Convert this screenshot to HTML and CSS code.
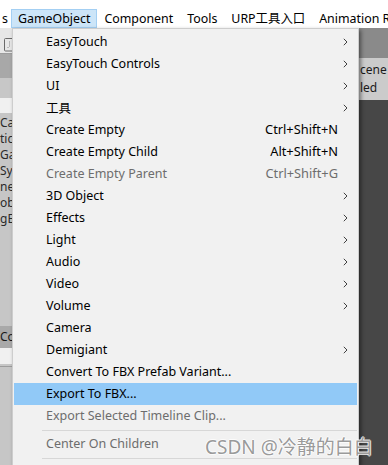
FILE: index.html
```html
<!DOCTYPE html>
<html>
<head>
<meta charset="utf-8">
<link rel="stylesheet" href="styles.css">
</head>
<body>
<div class="screen">
  <div class="menubar">
    <div class="mb-item first">s</div>
    <div class="mb-item active">GameObject</div>
    <div class="mb-item">Component</div>
    <div class="mb-item">Tools</div>
    <div class="mb-item">URP工具入口</div>
    <div class="mb-item">Animation R</div>
  </div>
  <div class="main">
    <div class="left">
      <div class="l-top">
        <svg class="l-icon" width="9" height="15" viewBox="0 0 9 15"><path d="M9 1.5H2.5a1 1 0 0 0-1 1V13a1 1 0 0 0 1 1H9" fill="none" stroke="#6a6a6a" stroke-width="1"/><path d="M6.5 4.5v6M4.5 10.5h2" fill="none" stroke="#8a8a8a" stroke-width="1" stroke-dasharray="1 1"/></svg>
      </div>
      <div class="l-dark"></div>
      <div class="l-mid"></div>
      <div class="l-input"></div>
      <div class="l-list">
        <div class="l-row">Ca</div>
        <div class="l-row">tic</div>
        <div class="l-row">Ga</div>
        <div class="l-row">Sy</div>
        <div class="l-row">ne</div>
        <div class="l-row">ob</div>
        <div class="l-row">gB</div>
      </div>
      <div class="l-fill"></div>
      <div class="l-co">Co</div>
      <div class="l-input2"></div>
      <div class="l-line"></div>
      <div class="l-rest"></div>
    </div>
    <div class="dropdown">
      <div class="row"><span>EasyTouch</span><svg class="arrow" width="5" height="8" viewBox="0 0 5 8"><path d="M0.8 0.8L4 4L0.8 7.2" fill="none" stroke="#404040" stroke-width="1"/></svg></div>
      <div class="row"><span>EasyTouch Controls</span><svg class="arrow" width="5" height="8" viewBox="0 0 5 8"><path d="M0.8 0.8L4 4L0.8 7.2" fill="none" stroke="#404040" stroke-width="1"/></svg></div>
      <div class="row"><span>UI</span><svg class="arrow" width="5" height="8" viewBox="0 0 5 8"><path d="M0.8 0.8L4 4L0.8 7.2" fill="none" stroke="#404040" stroke-width="1"/></svg></div>
      <div class="row"><span>工具</span><svg class="arrow" width="5" height="8" viewBox="0 0 5 8"><path d="M0.8 0.8L4 4L0.8 7.2" fill="none" stroke="#404040" stroke-width="1"/></svg></div>
      <div class="row"><span>Create Empty</span><span class="sc">Ctrl+Shift+N</span></div>
      <div class="row"><span>Create Empty Child</span><span class="sc">Alt+Shift+N</span></div>
      <div class="row disabled"><span>Create Empty Parent</span><span class="sc">Ctrl+Shift+G</span></div>
      <div class="row"><span>3D Object</span><svg class="arrow" width="5" height="8" viewBox="0 0 5 8"><path d="M0.8 0.8L4 4L0.8 7.2" fill="none" stroke="#404040" stroke-width="1"/></svg></div>
      <div class="row"><span>Effects</span><svg class="arrow" width="5" height="8" viewBox="0 0 5 8"><path d="M0.8 0.8L4 4L0.8 7.2" fill="none" stroke="#404040" stroke-width="1"/></svg></div>
      <div class="row"><span>Light</span><svg class="arrow" width="5" height="8" viewBox="0 0 5 8"><path d="M0.8 0.8L4 4L0.8 7.2" fill="none" stroke="#404040" stroke-width="1"/></svg></div>
      <div class="row"><span>Audio</span><svg class="arrow" width="5" height="8" viewBox="0 0 5 8"><path d="M0.8 0.8L4 4L0.8 7.2" fill="none" stroke="#404040" stroke-width="1"/></svg></div>
      <div class="row"><span>Video</span><svg class="arrow" width="5" height="8" viewBox="0 0 5 8"><path d="M0.8 0.8L4 4L0.8 7.2" fill="none" stroke="#404040" stroke-width="1"/></svg></div>
      <div class="row"><span>Volume</span><svg class="arrow" width="5" height="8" viewBox="0 0 5 8"><path d="M0.8 0.8L4 4L0.8 7.2" fill="none" stroke="#404040" stroke-width="1"/></svg></div>
      <div class="row"><span>Camera</span></div>
      <div class="row"><span>Demigiant</span><svg class="arrow" width="5" height="8" viewBox="0 0 5 8"><path d="M0.8 0.8L4 4L0.8 7.2" fill="none" stroke="#404040" stroke-width="1"/></svg></div>
      <div class="row"><span>Convert To FBX Prefab Variant...</span></div>
      <div class="row hl"><span>Export To FBX...</span></div>
      <div class="row disabled"><span>Export Selected Timeline Clip...</span></div>
      <div class="sep"></div>
      <div class="row disabled"><span>Center On Children</span></div>
      <div class="sep"></div>
    </div>
    <div class="right">
      <div class="r-top"></div>
      <div class="r-light">
        <div class="r-text">cene</div>
        <div class="r-text">led</div>
      </div>
      <div class="r-dark"></div>
    </div>
  </div>
  <div class="watermark">CSDN @冷静的白白</div>
</div>
</body>
</html>
```
FILE: styles.css
```css
html, body {
  margin: 0;
  padding: 0;
}
body {
  font-family: "Noto Sans", "Noto Sans CJK SC", sans-serif;
  font-size: 12px;
  color: #000;
}
.screen {
  position: relative;
  width: 388px;
  height: 465px;
  overflow: hidden;
  background: #c6c6c6;
}
.menubar {
  height: 28px;
  background: #fff;
  display: flex;
  align-items: flex-end;
  white-space: nowrap;
  box-sizing: border-box;
}
.mb-item {
  height: 19px;
  line-height: 17px;
  padding: 0 6px;
  border: 1px solid transparent;
  box-sizing: border-box;
  font-size: 12.4px;
  color: #000;
}
.mb-item.first {
  padding: 0 2px 0 1px;
}
.mb-item.active {
  background: #cce5f8;
  border-color: #a3cff3;
}
.main {
  display: flex;
  height: 437px;
}
.left {
  width: 12px;
  display: flex;
  flex-direction: column;
  overflow: hidden;
  flex: none;
}
.l-top {
  background: #e7e7e7;
  border-bottom: 1px solid #9c9c9c;
  display: flex;
  align-items: flex-start;
  padding-top: 9px;
  padding-left: 3px;
  height: 16px;
}
.l-icon {
  display: block;
}
.l-dark {
  height: 24px;
  background: #a8a8a8;
}
.l-mid {
  height: 20px;
  background: #c7c7c7;
}
.l-input {
  height: 15px;
  background: #f0f0f0;
}
.l-list {
  padding-top: 2px;
  display: flex;
  flex-direction: column;
}
.l-row {
  height: 16px;
  line-height: 15px;
  white-space: nowrap;
  color: #2a2a2a;
  font-size: 12px;
}
.l-fill {
  flex: 1;
}
.l-co {
  height: 22px;
  line-height: 21px;
  background: #a9a9a9;
  color: #1a1a1a;
  white-space: nowrap;
}
.l-input2 {
  height: 16px;
  background: #f0f0f0;
}
.l-line {
  margin-top: 2px;
  height: 1px;
  background: #9c9c9c;
}
.l-rest {
  flex: 1;
}
.dropdown {
  position: relative;
  z-index: 1;
  width: 347px;
  flex: none;
  box-sizing: border-box;
  border: 1px solid #cdcdcd;
  border-bottom: none;
  background: #f1f1f1;
  padding: 2px 1px 0 1px;
  box-shadow: 2px 2px 4px rgba(0, 0, 0, 0.45);
  white-space: nowrap;
  font-size: 12.5px;
}
.row {
  height: 22px;
  display: flex;
  align-items: center;
  padding-left: 32px;
  color: #000;
}
.row > span {
  margin-top: -2px;
}
.row.disabled {
  color: #6d6d6d;
}
.row.hl {
  background: #91c9f7;
}
.sc {
  margin-left: auto;
  padding-right: 19px;
  font-size: 12.8px;
}
.arrow {
  margin-left: auto;
  margin-right: 9px;
  display: block;
}
.sep {
  height: 1px;
  background: #d7d7d7;
  margin: 3px 0 2px 28px;
}
.right {
  flex: 1;
  display: flex;
  flex-direction: column;
  overflow: hidden;
}
.r-top {
  height: 30px;
  background: #8a8a8a;
}
.r-light {
  height: 42px;
  box-sizing: border-box;
  padding-top: 3px;
  background: #cbcbcb;
}
.r-text {
  height: 18px;
  line-height: 17px;
  color: #1a1a1a;
  white-space: nowrap;
  padding-left: 1px;
}
.r-dark {
  flex: 1;
  background: #474747;
}
.watermark {
  position: absolute;
  left: 205px;
  top: 435px;
  font-family: "Noto Sans", "Noto Sans CJK SC", sans-serif;
  font-size: 19px;
  line-height: 24px;
  color: #9a9a9a;
  white-space: nowrap;
  z-index: 2;
  text-shadow: 1px 0 0 rgba(255,255,255,0.8), -1px 0 0 rgba(255,255,255,0.8), 0 1px 0 rgba(255,255,255,0.8), 0 -1px 0 rgba(255,255,255,0.8);
}
```
